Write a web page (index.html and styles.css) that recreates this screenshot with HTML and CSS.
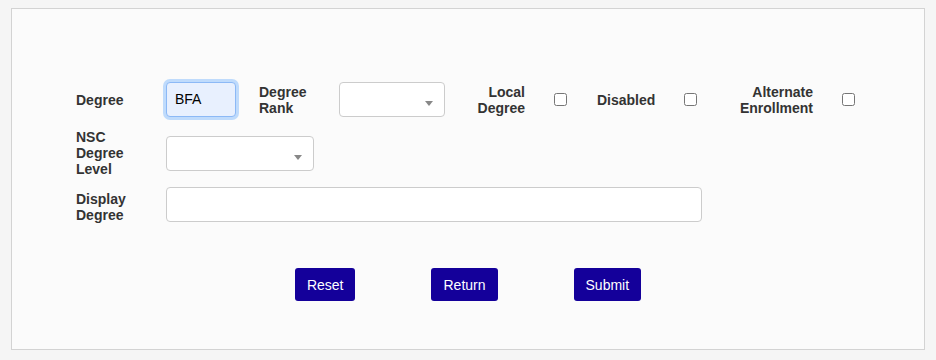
FILE: index.html
```html
<!DOCTYPE html>
<html lang="en">
<head>
    <meta charset="UTF-8">
    <title>Degree</title>
    <link rel="stylesheet" href="styles.css">
</head>
<body>
    <div class="card">
        <form class="degree_form">
            <div class="row row_top">
                <label class="lbl lbl_first" for="degree">Degree</label>
                <input class="txt txt_focus" id="degree" type="text" value="BFA">
                <label class="lbl lbl_rank">Degree<br>Rank</label>
                <div class="sel sel_rank"><span class="arrow"></span></div>
                <label class="lbl lbl_right lbl_local">Local<br>Degree</label>
                <input class="chk" type="checkbox">
                <label class="lbl lbl_disabled">Disabled</label>
                <input class="chk chk_disabled" type="checkbox">
                <label class="lbl lbl_right lbl_alt">Alternate<br>Enrollment</label>
                <input class="chk" type="checkbox">
            </div>

            <div class="row row_nsc">
                <label class="lbl lbl_first">NSC<br>Degree<br>Level</label>
                <div class="sel sel_nsc"><span class="arrow"></span></div>
            </div>

            <div class="row row_display">
                <label class="lbl lbl_first lbl_display">Display<br>Degree</label>
                <input class="txt txt_display" type="text">
            </div>

            <div class="buttons">
                <button type="button" class="btn">Reset</button>
                <button type="button" class="btn">Return</button>
                <button type="button" class="btn">Submit</button>
            </div>
        </form>
    </div>
</body>
</html>
```

FILE: styles.css
```css
*{
    margin: 0;
    padding: 0;
    box-sizing: border-box;
}

body{
    background-color: #f5f5f5;
    font-family: "Liberation Sans", Arial, sans-serif;
    padding: 8px 12px 0 11px;
}

.card{
    width: 914px;
    height: 342px;
    border: 1px solid #d3d3d3;
    background-color: #fbfbfb;
    padding: 72px 0 0 64px;
}

.row{
    display: flex;
    align-items: center;
}

.row_top{
    height: 36px;
}

.row_top .lbl{
    padding-top: 2px;
}

.row_nsc{
    margin-top: 12px;
    height: 48px;
}

.row_display{
    margin-top: 10px;
    height: 35px;
}

.lbl{
    font-size: 14px;
    line-height: 16px;
    font-weight: bold;
    color: #333;
}

.lbl_first{
    width: 90px;
}

.lbl_display{
    margin-top: 5px;
}

.lbl_rank{
    width: 80px;
    margin-left: 23px;
}

.lbl_right{
    text-align: right;
}

.lbl_local{
    width: 80px;
}

.lbl_disabled{
    width: 87px;
    margin-left: 30px;
}

.lbl_alt{
    width: 116px;
}

.txt{
    height: 35px;
    border: 1px solid #ccc;
    border-radius: 4px;
    background-color: #fff;
    font-family: inherit;
    font-size: 14px;
    color: #000;
    padding: 0 8px;
    outline: none;
}

.txt_focus{
    width: 70px;
    background-color: #e8f0fe;
    border-color: #8cb9f6;
    box-shadow: 0 0 0 3px #bfdbfc;
}

.txt_display{
    width: 536px;
    height: 35px;
}

.sel{
    position: relative;
    height: 35px;
    border: 1px solid #ccc;
    border-radius: 4px;
    background-color: #fff;
}

.sel_rank{
    width: 106px;
}

.sel_nsc{
    width: 148px;
}

.arrow{
    position: absolute;
    right: 11px;
    top: 18px;
    border-left: 4px solid transparent;
    border-right: 4px solid transparent;
    border-top: 5px solid #888;
}

.chk{
    width: 13px;
    height: 13px;
    margin: 0 0 0 29px;
}

.chk_disabled{
    margin-left: 0;
}

.buttons{
    display: flex;
    justify-content: center;
    gap: 76px;
    margin: 46px 64px 0 0;
}

.btn{
    height: 33px;
    padding: 0 12px;
    border: none;
    border-radius: 3px;
    background-color: #14009a;
    color: #fff;
    font-family: inherit;
    font-size: 14px;
}
```
